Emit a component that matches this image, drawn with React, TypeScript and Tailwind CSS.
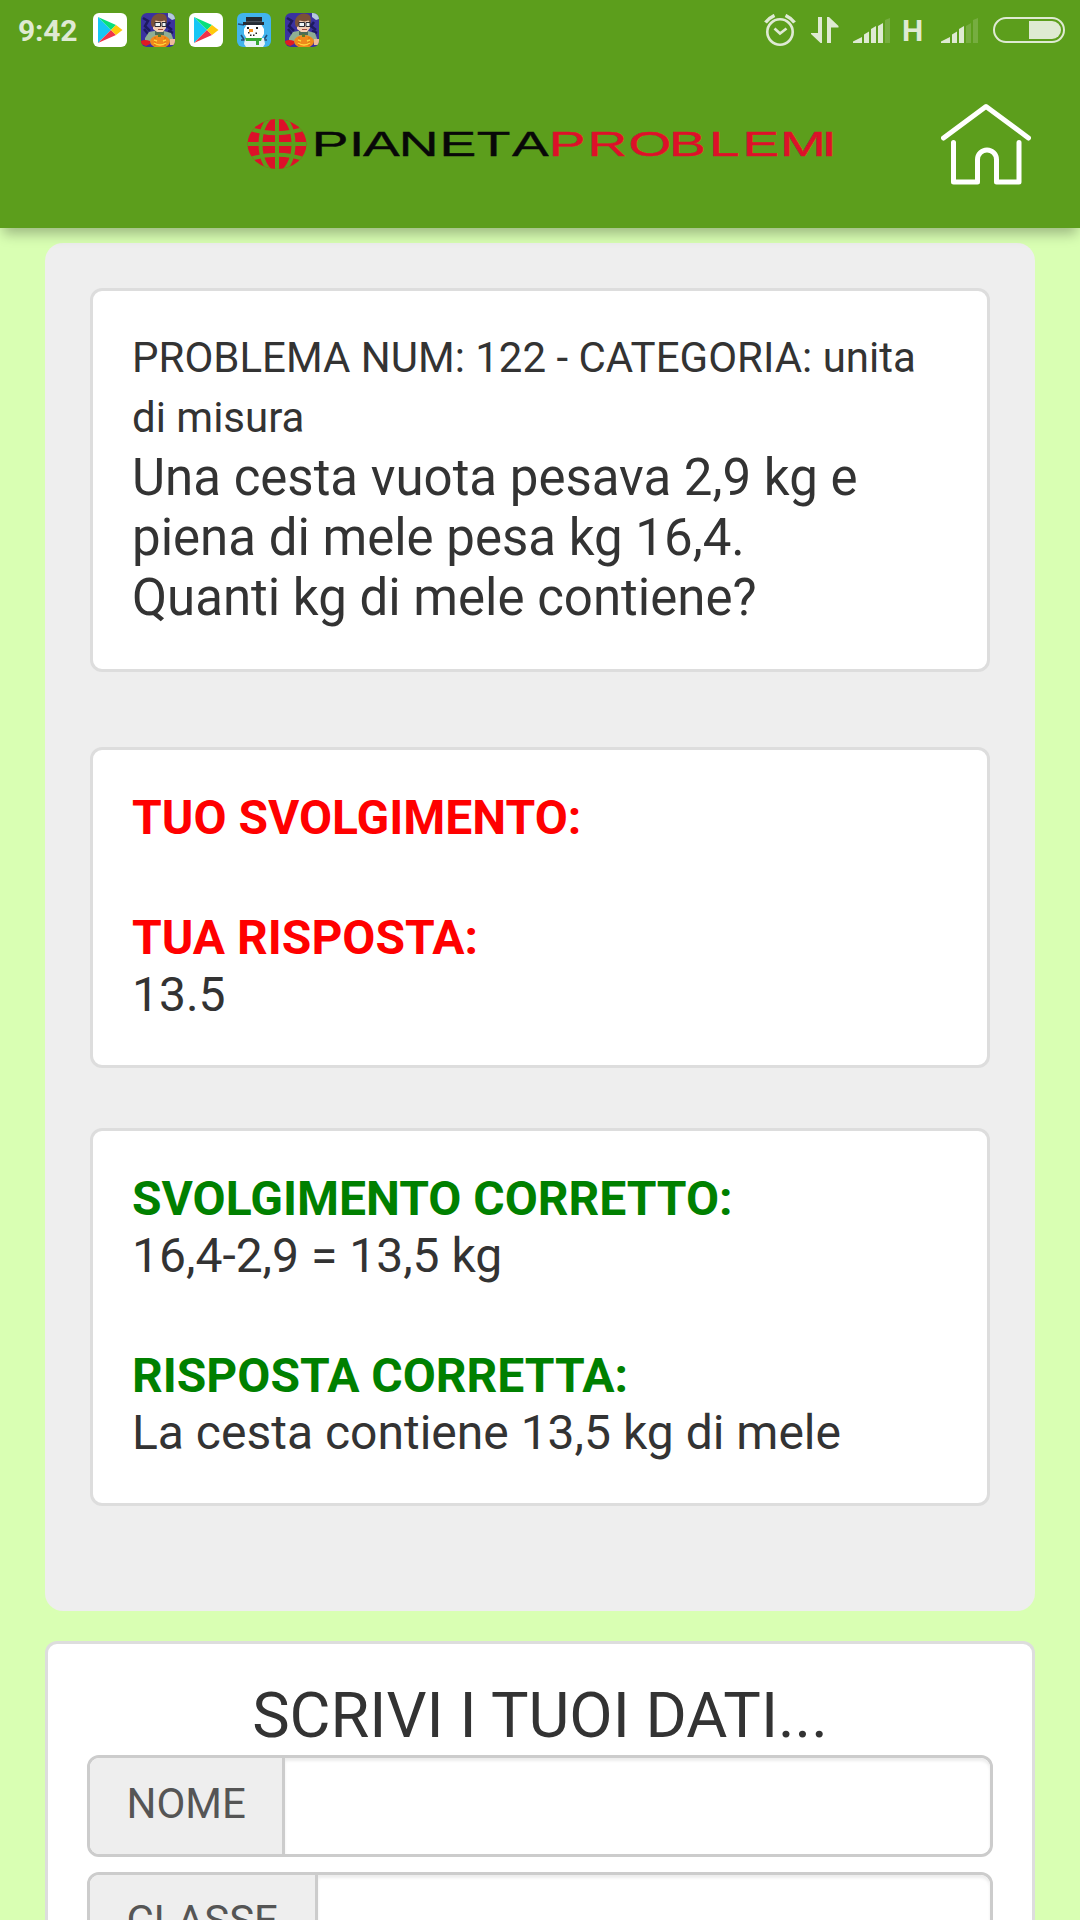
import type { ReactNode } from "react";

function PlayStore() {
  return (
    <svg viewBox="0 0 34 34" className="size-[34px]">
      <rect width="34" height="34" rx="6" fill="#fff" />
      <path d="M5 4v26l13-13z" fill="#16c6f5" />
      <path d="M5 4l13 13 5-5z" fill="#08e07c" />
      <path d="M5 30l13-13 5 5z" fill="#f03449" />
      <path d="M18 17l5-5 6.500 5-6.500 5z" fill="#ffc90a" />
    </svg>
  );
}

function PumpkinBoy() {
  return (
    <svg viewBox="0 0 34 34" className="size-[34px] rounded-md">
      <rect width="34" height="34" fill="#3a32a0" />
      <path d="M2 5l5 3-3 5 5 5M29 9l-3 4 5 4M3 16l5 6M27 18l5 2" stroke="#1d1a60" strokeWidth="2.500" fill="none" />
      <path d="M27 0h7v6l-3 1-4-3z" fill="#b5c9dd" />
      <path d="M4 25l4-6 5-1h10l7 2 3 8H4z" fill="#8fae93" />
      <path d="M14 17h9v5h-9z" fill="#4c6a58" />
      <path d="M12 7h13v8l-3 4h-6l-4-3z" fill="#f4cfb6" />
      <path d="M11 14c-3-7 1-13.500 8-13.500 6 0 8 4 6.500 10l-2-3-4 1-5-1-1 6z" fill="#7b5138" />
      <path d="M14 9.500h5.500v4H14zM21 9.500h4v4h-4z" fill="#eef4f6" stroke="#2b2b33" strokeWidth="1" />
      <path d="M17 16.500h5" stroke="#a34d40" />
      <ellipse cx="19" cy="28.500" rx="10" ry="6.500" fill="#f08a1c" />
      <path d="M17 21h3v3h-3z" fill="#5d7a2c" />
      <path d="M14 24v9M24 24v9" stroke="#d96a0c" />
      <path d="M13 27l3 1M22 28l3-1M13 30q6 4 12 0" stroke="#ffd83c" strokeWidth="1.500" fill="none" />
      <path d="M0 28q4-2 9 0v3l-4 2-5-2z" fill="#e01a22" />
      <path d="M29 26h5v6h-5z" fill="#edbb9a" />
    </svg>
  );
}

function Snowman() {
  return (
    <svg viewBox="0 0 34 34" className="size-[34px]">
      <rect width="34" height="34" rx="6" fill="#42b4ee" />
      <path d="M4 22l4 6M30 22l-4 6M4 27h5M25 27h5M1 11l6 1" stroke="#234f7a" strokeWidth="1.600" />
      <path d="M8 25h19l1 6-2 3H9l-2-3z" fill="#e8f2f8" />
      <path d="M10 11h14l3 5v5l-3 5H10l-3-5v-5z" fill="#fff" />
      <path d="M9 4h16v5h2v3H6V9h3z" fill="#252b33" />
      <path d="M9 8h16v1.200H9z" fill="#4b535c" />
      <path d="M10 14h2v2h-2zM19 14h2v2h-2zM11 19h1.500v1.500H11zM13 21.500h1.500V23H13zM16 21.500h1.500V23H16zM18.500 19.500H20V21h-1.500z" fill="#222" />
      <path d="M12 16h4v3h-4z" fill="#f7931e" />
      <path d="M8 25h17l-1 3h-2v4h-3v-4H9z" fill="#37a936" />
    </svg>
  );
}

function Signal({ width, off }: { width: number; off: number }) {
  const bars = [
    "M0 25v-1.500L9 19v6z",
    "M11 25v-8.500l5-3V25z",
    "M18 25V11l5-3v17z",
    "M25 25V8l5-3v20z",
    "M32 25V2l5-2v25z",
  ];
  return (
    <svg width={width} height="25" viewBox="0 0 37 25" fill="#dfead3">
      {bars.map((d, i) => (
        <path key={d} d={d} opacity={i >= off ? 0.2 : 1} />
      ))}
    </svg>
  );
}

function StatusBar() {
  return (
    <div className="flex h-[60px] items-center justify-between pl-[18px] pr-[15px] text-[#dfead3]">
      <div className="flex items-center">
        <span className="w-[75px] pt-[2px] text-[30px] font-bold leading-none tracking-[-0.2px]">9:42</span>
        <div className="flex gap-[14px]">
          <PlayStore />
          <PumpkinBoy />
          <PlayStore />
          <Snowman />
          <PumpkinBoy />
        </div>
      </div>
      <div className="flex items-center">
        <svg width="32" height="32" viewBox="0 0 32 32" fill="none" stroke="#dfead3" className="-mt-px">
          <circle cx="16" cy="18" r="12.700" strokeWidth="2.600" />
          <path d="M10.500 14.500l5.500 5 6.500-5" strokeWidth="2.700" />
          <path d="M1.500 8.500Q5 4 10.500 1.500M30.500 8.500Q27 4 21.500 1.500" strokeWidth="3.500" />
        </svg>
        <svg width="28" height="26" viewBox="0 0 28 26" fill="#dfead3" className="ml-[15px]">
          <path d="M7 0h4v26H9.500L0 17v-1h7zM16 0h2l9.500 9v1.500H20V26h-4z" />
        </svg>
        <div className="ml-[14px] flex pt-px">
          <Signal width={37} off={4} />
        </div>
        <span className="w-[51px] pl-[12px] pt-[2px] text-[30px] font-bold leading-none">H</span>
        <div className="flex pt-px">
          <Signal width={37} off={3} />
        </div>
        <div className="ml-[15px] flex h-[26px] w-[72px] justify-end rounded-full border-2 border-[#dfead3] p-[2px]">
          <div className="w-[32px] rounded-r-full bg-[#dfead3]" />
        </div>
      </div>
    </div>
  );
}

function Logo() {
  return (
    <svg width="590" height="54" viewBox="0 0 590 54" className="block">
      <defs>
        <clipPath id="globe">
          <ellipse cx="30" cy="26" rx="29.500" ry="25" />
        </clipPath>
      </defs>
      <g clipPath="url(#globe)">
        <rect width="60" height="54" fill="#dd1029" />
        <g fill="none" stroke="#5c9e1c" strokeWidth="4">
          <path d="M30 0v54M0 26h60" />
          <ellipse cx="30" cy="26" rx="16.500" ry="29" />
          <path d="M0 10Q30 20.500 60 10M0 42Q30 31.500 60 42" />
        </g>
      </g>
      <g transform="scale(1.53 1)" fontFamily="'Liberation Sans', sans-serif" fontSize="36" strokeWidth="0.400">
        <text x="42.3 66.6 75.8 99.2 125.9 150.2 173.2" y="38.300" fill="#080808" stroke="#080808">
          PIANETA
        </text>
        <text x="197.2 222.6 249.3 275.8 302 323.900 348.3 375.5" y="38.300" fill="#dd1029" stroke="#dd1029">
          PROBLEMI
        </text>
      </g>
    </svg>
  );
}

function Header() {
  return (
    <header className="relative z-10 h-[228px] bg-[#5c9e1c] shadow-[0_9px_12px_-3px_rgba(0,0,0,0.27)]">
      <StatusBar />
      <div className="flex items-start justify-between pl-[247px] pr-[49px] pt-[43px]">
        <div className="pt-[15px]">
          <Logo />
        </div>
        <svg width="90" height="82" viewBox="0 0 90 82" fill="none" stroke="#fff" strokeWidth="5" strokeLinecap="round" strokeLinejoin="round">
          <path d="M2.500 35L45 3.500 87.500 35M12.500 39.500V79h24V56.500a9.500 9.500 0 0 1 19 0V79H78V39.500" />
        </svg>
      </div>
    </header>
  );
}

function Card({ className, children }: { className: string; children: ReactNode }) {
  return (
    <section className={`rounded-xl border-[3px] border-[#ddd] bg-white px-[39px] ${className}`}>{children}</section>
  );
}

function Field({ label }: { label: string }) {
  return (
    <label className="flex h-[102px] overflow-hidden rounded-xl border-[3px] border-[#ccc]">
      <span className="flex items-center border-r-[3px] border-[#ccc] bg-[#eee] pb-[4px] pl-[36.5px] pr-[36.5px] text-[42px] leading-none text-[#555]">
        {label}
      </span>
      <input className="min-w-0 flex-1 rounded-r-[9px] bg-white shadow-[inset_0_3px_3px_rgba(0,0,0,0.075)] outline-none" />
    </label>
  );
}

export default function App() {
  return (
    <div className="h-[1920px] w-[1080px] overflow-hidden bg-[#d9ffb3] font-['Roboto',sans-serif] text-[#333]">
      <Header />
      <main className="px-[45px] pt-[15px]">
        <div className="h-[1368px] rounded-[18px] bg-[#eee] px-[45px] pt-[45px]">
          <Card className="h-[384px] pt-[37px]">
            <p className="text-[42px] leading-[60px]">
              PROBLEMA NUM: 122 - CATEGORIA: unita
              <br />
              di misura
            </p>
            <p className="text-[51px] leading-[60px]">
              Una cesta vuota pesava 2,9 kg e
              <br />
              piena di mele pesa kg 16,4.
              <br />
              Quanti kg di mele contiene?
            </p>
          </Card>
          <Card className="mt-[75px] h-[321px] pt-[38px] text-[48px] leading-[60px]">
            <h2 className="font-bold text-[#f00]">TUO SVOLGIMENTO:</h2>
            <h2 className="mt-[60px] font-bold text-[#f00]">TUA RISPOSTA:</h2>
            <p className="-mt-[3px]">13.5</p>
          </Card>
          <Card className="mt-[60px] h-[378px] pt-[38px] text-[48px] leading-[60px]">
            <h2 className="font-bold text-[#008000]">SVOLGIMENTO CORRETTO:</h2>
            <p className="-mt-[3px]">16,4-2,9 = 13,5 kg</p>
            <h2 className="mt-[60px] font-bold text-[#008000]">RISPOSTA CORRETTA:</h2>
            <p className="-mt-[3px]">La cesta contiene 13,5 kg di mele</p>
          </Card>
        </div>
        <div className="mt-[30px] h-[400px] rounded-xl border-[3px] border-[#ddd] bg-white px-[39px] pt-[34px]">
          <h1 className="mb-[2px] text-center text-[63px] leading-[75px]">SCRIVI I TUOI DATI...</h1>
          <div className="flex flex-col gap-[15px]">
            <Field label="NOME" />
            <Field label="CLASSE" />
          </div>
        </div>
      </main>
    </div>
  );
}
